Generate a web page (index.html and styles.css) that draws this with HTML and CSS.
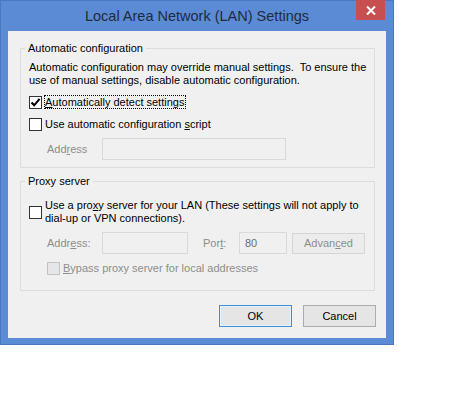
FILE: index.html
```html
<!DOCTYPE html>
<html lang="en">
<head>
    <meta charset="UTF-8">
    <title>Local Area Network (LAN) Settings</title>
    <link rel="stylesheet" href="styles.css">
</head>
<body>

<div class="window">
    <div class="titlebar">
        <span></span>
        <div class="title">Local Area Network (LAN) Settings</div>
        <div class="close">
            <svg width="10" height="9" viewBox="0 0 10 9">
                <path d="M1 0.5 L9 8.5 M9 0.5 L1 8.5" stroke="#fff" stroke-width="2"/>
            </svg>
        </div>
    </div>

    <div class="client">
        <fieldset class="group group-auto">
            <legend>Automatic configuration</legend>
            <p class="desc">Automatic configuration may override manual settings.&nbsp; To ensure the<br>use of manual settings, disable automatic configuration.</p>

            <div class="check-row detect">
                <span class="box">
                    <svg width="11" height="11" viewBox="0 0 11 11">
                        <path d="M1.5 5.5 L4.2 8.3 L9.6 1.8" fill="none" stroke="#000" stroke-width="2.1"/>
                    </svg>
                </span>
                <span class="focus"><u>A</u>utomatically detect settings</span>
            </div>

            <div class="check-row">
                <span class="box"></span>
                <span>Use automatic configuration <u>s</u>cript</span>
            </div>

            <div class="field-row">
                <span class="label addr-label disabled">Add<u>r</u>ess</span>
                <span class="input input-script"></span>
            </div>
        </fieldset>

        <fieldset class="group group-proxy">
            <legend>Proxy server</legend>

            <div class="check-row proxy-check">
                <span class="box"></span>
                <span>Use a pro<u>x</u>y server for your LAN (These settings will not apply to<br>dial-up or VPN connections).</span>
            </div>

            <div class="field-row proxy-fields">
                <span class="label addr-label disabled">Addr<u>e</u>ss:</span>
                <span class="input input-address"></span>
                <span class="label port-label disabled">Por<u>t</u>:</span>
                <span class="input input-port">80</span>
                <span class="btn btn-advanced">Advan<u>c</u>ed</span>
            </div>

            <div class="check-row bypass">
                <span class="box box-disabled"></span>
                <span class="disabled"><u>B</u>ypass proxy server for local addresses</span>
            </div>
        </fieldset>

        <div class="actions">
            <button class="btn btn-default">OK</button>
            <button class="btn">Cancel</button>
        </div>
    </div>
</div>

</body>
</html>
```

FILE: styles.css
```css
/* Base page */
body {
    margin: 0;
    background-color: #fff;
    font-family: 'Segoe UI', 'Liberation Sans', Arial, sans-serif;
    font-size: 11px;
    color: #000;
}

u {
    text-decoration-thickness: 1px;
    text-underline-offset: 1px;
}

/* Window frame */
.window {
    width: 378px;
    padding: 0 8px 7px 8px;
    background-color: #5b8bd5;
    box-shadow: inset 0 0 0 1px #4a78c0;
}

.titlebar {
    display: grid;
    grid-template-columns: 1fr auto 1fr;
    height: 31px;
    margin: 0 -8px;
}

.title {
    font-size: 14.5px;
    color: #1f2b3c;
    line-height: 31px;
    padding-top: 1px;
}

.close {
    justify-self: end;
    align-self: start;
    width: 29px;
    height: 20px;
    margin-right: 9px;
    background-color: #c74f50;
    display: flex;
    align-items: center;
    justify-content: center;
}

/* Client area */
.client {
    background-color: #f0f0f0;
    height: 307px;
    padding: 10px 0 0 12px;
    box-sizing: border-box;
}

/* Group boxes */
.group {
    width: 355px;
    margin: 0;
    padding: 0 0 0 8px;
    border: 1px solid #dcdcdc;
    box-sizing: border-box;
}

.group legend {
    padding: 0 3px;
    margin-left: -4px;
    line-height: 15px;
}

.group-auto {
    height: 127px;
}

.group-proxy {
    height: 117px;
    margin-top: 6px;
}

.desc {
    margin: 5px 0 0 0;
    line-height: 13px;
}

/* Checkboxes */
.check-row {
    display: flex;
    align-items: center;
    gap: 3px;
    height: 22px;
}

.box {
    width: 11px;
    height: 11px;
    border: 1px solid #333;
    background-color: #fff;
    display: flex;
    align-items: center;
    justify-content: center;
    flex: none;
}

.box-disabled {
    border-color: #c3c3c3;
    background-color: #e6e6e6;
}

.focus {
    outline: 1px dotted #000;
    outline-offset: 0;
    padding-right: 1px;
}

.detect {
    margin-top: 4px;
}

.proxy-check {
    height: 28px;
    margin-top: 9px;
    line-height: 13px;
}

.bypass {
    margin-left: 18px;
    margin-top: 2px;
    height: 22px;
}

/* Field rows */
.field-row {
    display: flex;
    align-items: center;
    margin-left: 18px;
    height: 25px;
    margin-top: 1px;
}

.label {
    flex: none;
}

.addr-label {
    width: 55px;
}

.port-label {
    width: 36px;
    margin-left: 15px;
}

.disabled {
    color: #8d8d8d;
}

.input {
    height: 20px;
    border: 1px solid #d9d9d9;
    background-color: #f0f0f0;
    box-sizing: content-box;
    color: #6d6d6d;
    line-height: 20px;
    padding-left: 5px;
}

.input-script {
    width: 177px;
}

.input-address {
    width: 79px;
}

.input-port {
    width: 41px;
}

.proxy-fields {
    margin-top: 5px;
    height: 24px;
}

/* Buttons */
.btn {
    display: inline-flex;
    align-items: center;
    justify-content: center;
    height: 21px;
    box-sizing: border-box;
    border: 1px solid #acacac;
    background-color: #e5e5e5;
    font-family: inherit;
    font-size: 11px;
    color: #000;
    padding: 0;
}

.btn-advanced {
    width: 73px;
    margin-left: 5px;
    border-color: #d5d5d5;
    background-color: #ececec;
    color: #8d8d8d;
}

.actions {
    display: flex;
    justify-content: flex-end;
    gap: 11px;
    margin-top: 14px;
    padding-right: 10px;
}

.actions .btn {
    width: 73px;
    height: 22px;
}

.btn-default {
    border-color: #3c8fdb;
    box-shadow: inset 0 0 0 1px #e5f1fb;
}
```
